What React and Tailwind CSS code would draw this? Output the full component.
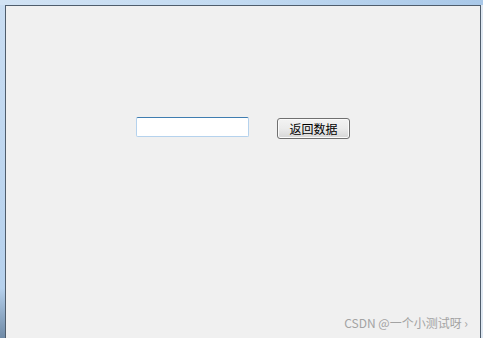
export default function App() {
  return (
    <div className="w-[483px] h-[338px] overflow-hidden flex flex-col bg-gradient-to-r from-[#d2e3f4] via-[#c2daf1] to-[#a9c8e8] pt-[5px]">
      <div className="flex flex-1 min-h-0">
        <div className="w-[5px] bg-gradient-to-b from-[#c9ddf2] via-[#b6d1ed] via-85% to-[#6f8aa6]"></div>
        <div className="flex-1 flex flex-col bg-[#f0f0f0] border-t border-l border-r border-[#4f5d6c] relative">
          <div className="flex items-start pl-[130px] pt-[111px]">
            <input
              type="text"
              className="w-[113px] h-[20px] bg-white border border-[#b5d2ed] border-t-[#3f7db0] rounded-[2px] outline-none"
            />
            <button
              className="ml-[28px] mt-[1px] w-[73px] h-[21px] rounded-[3px] border border-[#707070] bg-gradient-to-b from-[#f3f3f3] via-[#ebebeb] to-[#d6d6d6] shadow-[inset_0_0_0_1px_#fbfbfb] text-[12px] leading-[19px] text-black"
              style={{ fontFamily: '"Noto Sans CJK SC", sans-serif' }}
            >
              返回数据
            </button>
          </div>
          <div className="mt-auto flex justify-end pr-[12px] pb-[7px]">
            <span
              className="text-[12px] leading-[16px] text-[#a3a3a3]"
              style={{ fontFamily: '"Noto Sans CJK SC", sans-serif' }}
            >
              CSDN @一个小测试呀 ›
            </span>
          </div>
        </div>
        <div className="w-[2px] bg-[#dfe8f2]"></div>
      </div>
    </div>
  );
}
